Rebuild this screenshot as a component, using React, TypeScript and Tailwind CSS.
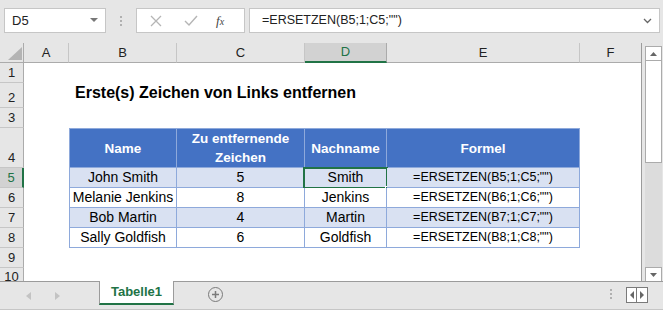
import React from "react";

const FONT = { fontFamily: '"Liberation Sans", Arial, sans-serif' };

const colW = [24, 45, 108, 128, 82, 193, 62];
const rowH = [20, 20, 25, 20, 40, 20, 20, 20, 20, 20, 13];
const letters = ["A", "B", "C", "D", "E", "F"];

const data = [
  ["John Smith", "5", "Smith", '=ERSETZEN(B5;1;C5;"")'],
  ["Melanie Jenkins", "8", "Jenkins", '=ERSETZEN(B6;1;C6;"")'],
  ["Bob Martin", "4", "Martin", '=ERSETZEN(B7;1;C7;"")'],
  ["Sally Goldfish", "6", "Goldfish", '=ERSETZEN(B8;1;C8;"")'],
];

function Toolbar() {
  return (
    <div className="h-[43px] flex items-start pt-[8px] shrink-0">
      <div className="ml-[4px] w-[102px] h-[25px] bg-white border border-[#c6c6c6] flex items-center justify-between pl-[7px] pr-[7px] text-[13px] text-[#222]">
        <span>D5</span>
        <svg width="8" height="5" viewBox="0 0 8 5"><path d="M0 0 L8 0 L4 4 Z" fill="#777" /></svg>
      </div>
      <div className="w-[30px] h-[25px] flex flex-col items-center justify-center gap-[2px]">
        <div className="w-[2px] h-[2px] bg-[#b0b0b0]" />
        <div className="w-[2px] h-[2px] bg-[#b0b0b0]" />
        <div className="w-[2px] h-[2px] bg-[#b0b0b0]" />
      </div>
      <div className="w-[109px] h-[25px] bg-white border border-[#c6c6c6] flex items-center">
        <svg className="ml-[13px]" width="12" height="12" viewBox="0 0 12 12"><path d="M1 1 L11 11 M11 1 L1 11" stroke="#b5b5b5" strokeWidth="1.3" /></svg>
        <svg className="ml-[22px]" width="14" height="12" viewBox="0 0 14 12"><path d="M1 6 L5 10 L13 1" stroke="#b5b5b5" strokeWidth="1.4" fill="none" /></svg>
        <span className="ml-[18px] text-[13px] italic text-[#444]" style={{ fontFamily: '"Liberation Serif", serif' }}>
          <i>f</i><span className="text-[10px]">x</span>
        </span>
      </div>
      <div className="ml-[4px] w-[411px] h-[25px] bg-white border border-[#c6c6c6] flex items-center justify-between pl-[12px] pr-[7px] text-[12.5px] text-[#222]">
        <span>=ERSETZEN(B5;1;C5;"")</span>
        <svg width="9" height="6" viewBox="0 0 9 6"><path d="M1 1 L4.5 4.5 L8 1" stroke="#666" strokeWidth="1.3" fill="none" /></svg>
      </div>
    </div>
  );
}

function ColHeaders() {
  return (
    <>
      <div className="h-[20px] bg-[#e6e6e6] border-r border-[#ababab] border-b border-b-[#ababab] relative">
        <svg className="absolute left-[8px] top-[4px]" width="14" height="13" viewBox="0 0 14 13"><path d="M14 0 L14 13 L0 13 Z" fill="#b4b4b4" /></svg>
      </div>
      {letters.map((l) => {
        const sel = l === "D";
        return (
          <div
            key={l}
            className={
              sel
                ? "h-[20px] bg-[#d2d2d2] border-r border-[#ababab] border-b-2 border-b-[#217346] flex items-center justify-center text-[13px] text-[#217346]"
                : "h-[20px] bg-[#e6e6e6] border-r border-[#c6c6c6] border-b border-b-[#ababab] flex items-center justify-center text-[13px] text-[#222]"
            }
          >
            {l}
          </div>
        );
      })}
    </>
  );
}

function RowHeader({ n }: { n: number }) {
  const sel = n === 5;
  if (n === 10) {
    return (
      <div className="bg-[#e6e6e6] border-r border-[#ababab] overflow-hidden flex items-start justify-center pt-[1px] text-[13px] leading-[16px] text-[#222]">
        {n}
      </div>
    );
  }
  return (
    <div
      className={
        sel
          ? "bg-[#d2d2d2] border-r-2 border-[#217346] border-b border-b-[#c6c6c6] flex items-end justify-center pb-[1px] text-[13px] leading-[17px] text-[#217346]"
          : "bg-[#e6e6e6] border-r border-[#ababab] border-b border-b-[#c6c6c6] flex items-end justify-center pb-[1px] text-[13px] leading-[17px] text-[#222]"
      }
    >
      {n}
    </div>
  );
}

function Sheet() {
  const cells: React.ReactNode[] = [];
  cells.push(<RowHeader key="r1" n={1} />);
  for (let i = 0; i < 6; i++) cells.push(<div key={"r1c" + i} className="bg-white" />);
  cells.push(<RowHeader key="r2" n={2} />);
  cells.push(<div key="r2a" className="bg-white" />);
  cells.push(
    <div key="r2b" className="bg-white col-span-5 flex items-end pb-[3px] pl-[6px] text-[16px] font-bold text-black whitespace-nowrap">
      Erste(s) Zeichen von Links entfernen
    </div>
  );
  cells.push(<RowHeader key="r3" n={3} />);
  for (let i = 0; i < 6; i++) cells.push(<div key={"r3c" + i} className="bg-white" />);
  cells.push(<RowHeader key="r4" n={4} />);
  cells.push(<div key="r4a" className="bg-white" />);
  const hdr = ["Name", "Zu entfernende Zeichen", "Nachname", "Formel"];
  hdr.forEach((h, i) => {
    cells.push(
      <div
        key={"h" + i}
        className={
          "bg-[#4472c4] text-white font-bold text-[13.5px] leading-[19px] flex items-center justify-center text-center border-t border-b border-r border-[#8ea9db]" +
          (i === 0 ? " border-l" : "")
        }
      >
        {i === 1 ? (
          <span>
            Zu entfernende
            <br />
            Zeichen
          </span>
        ) : (
          h
        )}
      </div>
    );
  });
  cells.push(<div key="r4f" className="bg-white" />);
  data.forEach((row, ri) => {
    const n = 5 + ri;
    const band = ri % 2 === 0;
    cells.push(<RowHeader key={"rh" + n} n={n} />);
    cells.push(<div key={"a" + n} className="bg-white" />);
    row.forEach((v, ci) => {
      const isSel = n === 5 && ci === 2;
      cells.push(
        <div
          key={"c" + n + ci}
          className={
            (band ? "bg-[#d9e1f2]" : "bg-white") +
            (ci === 3 ? " text-[12.5px]" : " text-[14px]") +
            " relative text-black flex items-center justify-center border-b border-r border-[#8ea9db] whitespace-nowrap" +
            (ci === 0 ? " border-l" : "")
          }
        >
          {v}
          {isSel && (
            <>
              <div className="absolute left-[-2px] top-[-1px] right-[-2px] bottom-[-2px] border-2 border-[#217346]" />
              <div className="absolute right-[-4px] bottom-[-4px] w-[5px] h-[5px] bg-[#217346] border border-white" />
            </>
          )}
        </div>
      );
    });
    cells.push(<div key={"f" + n} className="bg-white" />);
  });
  [9, 10].forEach((n) => {
    cells.push(<RowHeader key={"rh" + n} n={n} />);
    for (let i = 0; i < 6; i++) cells.push(<div key={"r" + n + "c" + i} className="bg-white" />);
  });

  return (
    <div
      className="grid w-[642px] h-[238px] overflow-hidden border-r border-[#9b9b9b]"
      style={{
        gridTemplateColumns: colW.map((w) => w + "px").join(" "),
        gridTemplateRows: rowH.map((h) => h + "px").join(" "),
      }}
    >
      <ColHeaders />
      {cells}
    </div>
  );
}

function VScroll() {
  return (
    <div className="w-[21px] h-[238px] flex flex-col pl-[3px] pr-[1px] pt-[3px]">
      <div className="h-[15px] bg-white border border-[#ababab] flex items-center justify-center">
        <svg width="7" height="4" viewBox="0 0 7 4"><path d="M0 4 L7 4 L3.5 0 Z" fill="#666" /></svg>
      </div>
      <div className="h-[102px] bg-white border border-[#ababab] border-t-0" />
      <div className="flex-1 bg-[#dcdcdc]" />
      <div className="h-[15px] bg-white border border-[#ababab] flex items-center justify-center mb-[-1px]">
        <svg width="7" height="4" viewBox="0 0 7 4"><path d="M0 0 L7 0 L3.5 4 Z" fill="#666" /></svg>
      </div>
    </div>
  );
}

function TabBar() {
  return (
    <div className="h-[29px] flex items-start border-t border-[#9b9b9b] relative">
      <div className="w-[99px] h-[27px] flex items-center">
        <svg className="ml-[26px]" width="5" height="8" viewBox="0 0 5 8"><path d="M5 0 L5 8 L0 4 Z" fill="#c3c3c3" /></svg>
        <svg className="ml-[24px]" width="5" height="8" viewBox="0 0 5 8"><path d="M0 0 L0 8 L5 4 Z" fill="#c3c3c3" /></svg>
      </div>
      <div className="w-[75px] h-[24px] mt-[-1px] bg-white border-l border-r border-[#9b9b9b] border-b-2 border-b-[#217346] flex items-center justify-center text-[13px] font-bold text-[#217346]">
        Tabelle1
      </div>
      <div className="ml-[34px] mt-[5px] w-[15px] h-[15px] rounded-full border-[1.5px] border-[#7a7a7a] flex items-center justify-center">
        <svg width="9" height="9" viewBox="0 0 9 9"><path d="M4.5 1 L4.5 8 M1 4.5 L8 4.5" stroke="#7a7a7a" strokeWidth="1.5" /></svg>
      </div>
      <div className="ml-[387px] mt-[7px] flex flex-col gap-[2px]">
        <div className="w-[2px] h-[2px] bg-[#b0b0b0]" />
        <div className="w-[2px] h-[2px] bg-[#b0b0b0]" />
        <div className="w-[2px] h-[2px] bg-[#b0b0b0]" />
      </div>
      <div className="ml-[14px] mt-[5px] flex">
        <div className="w-[11px] h-[16px] bg-white border border-[#7a7a7a] flex items-center justify-center">
          <svg width="4" height="8" viewBox="0 0 4 8"><path d="M4 0 L4 8 L0 4 Z" fill="#666" /></svg>
        </div>
        <div className="w-[11px] h-[16px] bg-white border border-[#7a7a7a] border-l-0 flex items-center justify-center">
          <svg width="4" height="8" viewBox="0 0 4 8"><path d="M0 0 L0 8 L4 4 Z" fill="#666" /></svg>
        </div>
      </div>
      <div className="absolute left-0 right-0 bottom-0 h-[1px] bg-[#c6c6c6]" />
    </div>
  );
}

export default function App() {
  return (
    <div className="w-[663px] h-[310px] bg-[#e6e6e6] flex flex-col overflow-hidden" style={FONT}>
      <Toolbar />
      <div className="flex h-[238px] shrink-0">
        <Sheet />
        <VScroll />
      </div>
      <TabBar />
    </div>
  );
}
